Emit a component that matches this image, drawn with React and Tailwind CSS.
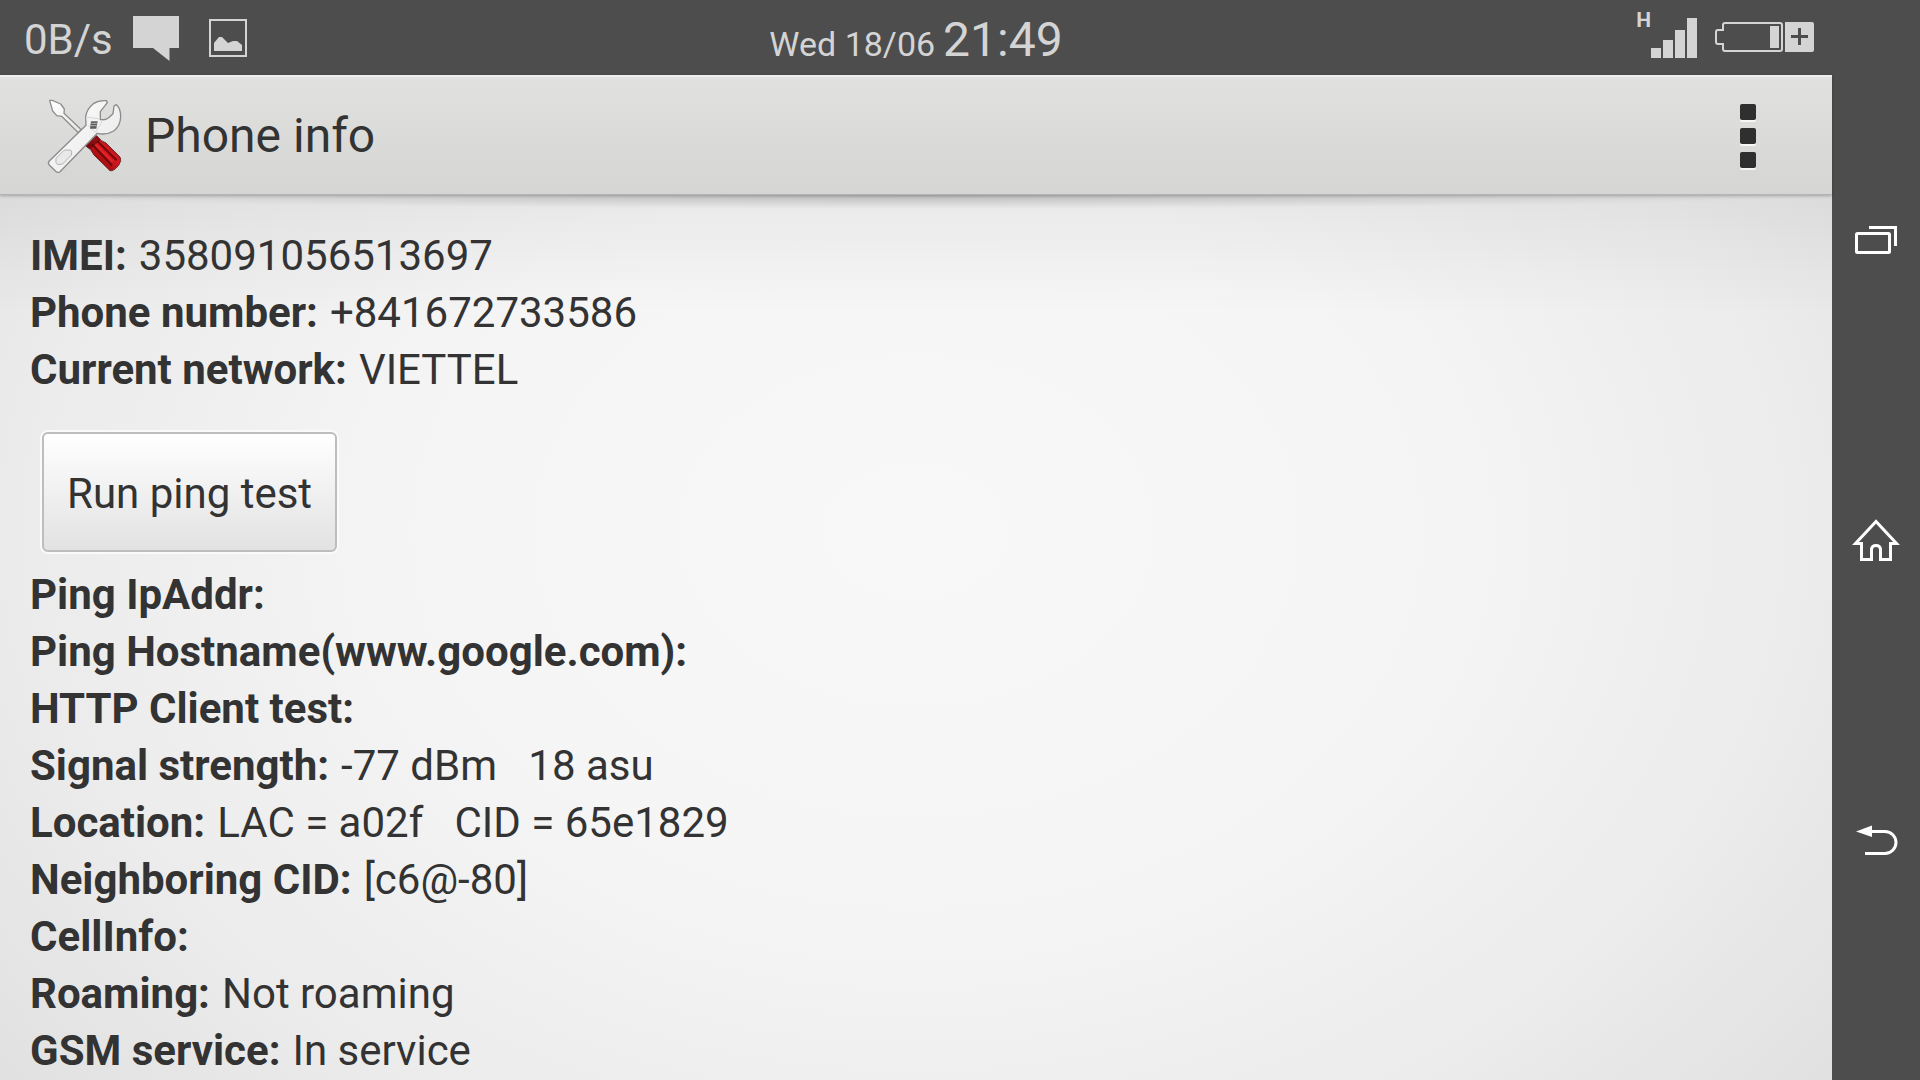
const pingTests = [
  { label: "Ping IpAddr:" },
  { label: "Ping Hostname(www.google.com):" },
  { label: "HTTP Client test:" },
];

const identity = [
  { label: "IMEI:", value: "358091056513697" },
  { label: "Phone number:", value: "+841672733586" },
  { label: "Current network:", value: "VIETTEL" },
];

const radio = [
  { label: "Signal strength:", value: "-77 dBm   18 asu" },
  { label: "Location:", value: "LAC = a02f   CID = 65e1829" },
  { label: "Neighboring CID:", value: "[c6@-80]" },
  { label: "CellInfo:" },
  { label: "Roaming:", value: "Not roaming" },
  { label: "GSM service:", value: "In service" },
];

function InfoList({ rows }) {
  return (
    <dl className="text-[42px] leading-[57px]">
      {rows.map((row) => (
        <div key={row.label} className="flex gap-3 whitespace-pre">
          <dt className="font-bold">{row.label}</dt>
          <dd>{row.value}</dd>
        </div>
      ))}
    </dl>
  );
}

function ToolsIcon() {
  return (
    <svg viewBox="45 34 234 234" className="size-[78px] shrink-0" aria-hidden="true">
      <defs>
        <linearGradient id="handle" x1="0" y1="1" x2="1" y2="0">
          <stop offset="0" stopColor="#5a080a" />
          <stop offset="0.35" stopColor="#a80d11" />
          <stop offset="0.6" stopColor="#d81a1f" />
          <stop offset="1" stopColor="#5a080a" />
        </linearGradient>
        <linearGradient id="steel" x1="0" y1="0" x2="1" y2="1">
          <stop offset="0" stopColor="#ffffff" />
          <stop offset="1" stopColor="#e6e6e6" />
        </linearGradient>
      </defs>
      {/* screwdriver */}
      <path
        d="M59 44 L67 44 L92 55 L103 70 L102 83 L154 132 L145 141 L95 92 L80 90 L68 76 Z"
        fill="url(#steel)"
        stroke="#8f8f8f"
        strokeWidth="4"
        strokeLinejoin="round"
      />
      <path d="M166 180 L200 150 L214 165 L228 172 L270 214 Q276 224 266 239 Q250 258 240 255 L192 208 L182 192 Z" fill="url(#handle)" stroke="#6b2a2c" strokeWidth="3" />
      <path d="M186 176 L246 240 M202 166 L260 224" stroke="#6d080b" strokeWidth="6" />
      <path d="M196 176 L248 228" stroke="#e8262b" strokeWidth="5" />
      <path d="M168 180 L200 151 L212 163 L180 190 Z" fill="#3a0507" opacity="0.45" />
      {/* wrench */}
      <path
        d="M167 93 Q170 70 190 54 Q207 43 229 45 L232 51 L211 78 L211 101 Q224 105 236 96 L249 84 L252 61 L259 57 Q273 70 272 94 Q271 121 251 136 Q230 149 202 143 L90 258 Q84 263 77 257 L57 237 Q53 231 58 226 L168 119 Z"
        fill="url(#steel)"
        stroke="#8c8c8c"
        strokeWidth="4"
        strokeLinejoin="round"
      />
      <path d="M169 94 L206 99 L216 109 L206 124 L196 140 L174 119" fill="#f2f2f2" stroke="#c9c9c9" strokeWidth="2" />
      <path d="M183 107 H203 L199 129 H180 Z" fill="#5c5c5c" />
      <path d="M184 113 H201 M182 120 H200" stroke="#dddddd" strokeWidth="2" />
      <path d="M78 218 L101 195 Q106 192 111 193 L123 194 Q127 197 124 208 L98 235 L83 237 Q75 232 78 218 Z" fill="#e9e9e9" stroke="#b5b5b5" strokeWidth="3" />
    </svg>
  );
}

function StatusBar() {
  return (
    <div className="grid h-[75px] grid-cols-[1fr_auto_1fr] bg-[#4d4d4d] text-[#d4d4d4]">
      <div className="flex items-start pl-6">
        <span className="text-[42px] leading-[80px]">0B/s</span>
        <svg viewBox="0 0 46 46" className="mt-4 ml-5 size-[46px]" fill="currentColor" aria-hidden="true">
          <path d="M0 0H46V32H36.500V45L20 32H0Z" />
        </svg>
        <svg viewBox="0 0 38 38" className="mt-[19px] ml-[30px] size-[38px]" aria-hidden="true">
          <rect x="1" y="1" width="36" height="36" fill="none" stroke="currentColor" strokeWidth="2" />
          <path d="M5 32V24L10 18H13L19 24L24 22H28L33 26V32Z" fill="currentColor" />
        </svg>
      </div>

      <p className="flex items-baseline gap-2 leading-[80px]">
        <span className="text-[34px]">Wed 18/06</span>
        <time className="text-[48px]">21:49</time>
      </p>

      <div className="flex items-start justify-end pr-[18px]">
        <span className="mt-[9px] text-[21px] leading-[23px] font-bold">H</span>
        <svg viewBox="0 0 46 40" className="mt-[18px] h-10 w-[46px]" fill="currentColor" aria-hidden="true">
          <path d="M0 30H10V40H0ZM12 22H22V40H12ZM24 12H34V40H24ZM36 0H46V40H36Z" />
        </svg>
        <svg viewBox="0 0 99 30" className="mt-[22px] ml-[18px] h-[30px] w-[99px]" aria-hidden="true">
          <path
            d="M10 1H65Q67 1 67 3V27Q67 29 65 29H10Q8 29 8 27V22H3Q1 22 1 20V10Q1 8 3 8H8V3Q8 1 10 1Z"
            fill="none"
            stroke="currentColor"
            strokeWidth="2"
          />
          <path d="M55 4H64V26H55ZM70 0H97Q99 0 99 2V28Q99 30 97 30H70Z" fill="currentColor" />
          <path d="M76 14.500H93M84.500 6V23" stroke="#4d4d4d" strokeWidth="3" />
        </svg>
      </div>
    </div>
  );
}

function ActionBar() {
  return (
    <header className="relative flex h-[120px] items-center border-t-2 border-b border-t-[#eeeeee] border-b-[#b4b4b4] bg-linear-to-b from-[#e1e1e0] to-[#d5d5d4] pr-[60px] pl-[45px] shadow-[0_1px_3px_rgba(0,0,0,0.25)]">
      <ToolsIcon />
      <h1 className="ml-[22px] text-[48px] leading-[56px]">Phone info</h1>
      <button type="button" aria-label="More options" className="ml-auto flex w-12 flex-col items-center gap-2">
        <span className="size-4 rounded-xs bg-[#2f2f2f] shadow-[0_2px_0_#f6f6f6]" />
        <span className="size-4 rounded-xs bg-[#2f2f2f] shadow-[0_2px_0_#f6f6f6]" />
        <span className="size-4 rounded-xs bg-[#2f2f2f] shadow-[0_2px_0_#f6f6f6]" />
      </button>
    </header>
  );
}

function NavBar() {
  const button = "grid h-[300px] w-full place-items-center";

  return (
    <nav className="flex w-[88px] shrink-0 flex-col justify-center bg-[#4d4d4d] text-white">
      <button type="button" aria-label="Recent apps" className={button}>
        <svg viewBox="0 0 48 48" className="size-12" fill="none" stroke="currentColor" strokeWidth="3" aria-hidden="true">
          <rect x="4.500" y="17.500" width="33" height="19" rx="1" />
          <path d="M17 11.500H43.500V30" />
        </svg>
      </button>
      <button type="button" aria-label="Home" className={button}>
        <svg viewBox="0 0 48 48" className="size-12" fill="none" stroke="currentColor" strokeWidth="3" aria-hidden="true">
          <path d="M24 5.500L3.500 27.500H9.500V43.500H19.500V33Q20 29.500 24 29.500Q28 29.500 28.500 33V43.500H38.500V27.500H44.500Z" />
        </svg>
      </button>
      <button type="button" aria-label="Back" className={button}>
        <svg viewBox="0 0 48 48" className="size-12" fill="none" stroke="currentColor" strokeWidth="3" aria-hidden="true">
          <path d="M18 15.500H33A11 11 0 0 1 33 37.500H13" />
          <path d="M4 15.500L20 9.500V21Z" fill="currentColor" stroke="none" />
        </svg>
      </button>
    </nav>
  );
}

export default function App() {
  return (
    <div className="flex min-h-screen font-[Roboto,sans-serif] text-[#333333]">
      <div className="flex min-w-0 flex-1 flex-col">
        <StatusBar />
        <ActionBar />
        <main className="flex-1 bg-[radial-gradient(50%_14px_at_50%_0,rgba(0,0,0,0.2),transparent),linear-gradient(rgba(0,0,0,0.05),transparent_120px),radial-gradient(68%_105%_at_50%_38%,#f8f8f8_0%,#f5f5f5_40%,#ececec_70%,#dedede_100%)] px-[30px] pt-8">
          <InfoList rows={identity} />
          <button
            type="button"
            className="mx-3 mt-[34px] mb-[14px] block h-[120px] rounded-md border-2 border-[#bdbdbd] bg-linear-to-b from-white to-[#e2e2e2] px-[23px] pt-[2px] text-[42px] leading-[57px] shadow-[0_0_0_2px_#fafafa]"
          >
            Run ping test
          </button>
          <InfoList rows={[...pingTests, ...radio]} />
        </main>
      </div>
      <NavBar />
    </div>
  );
}
